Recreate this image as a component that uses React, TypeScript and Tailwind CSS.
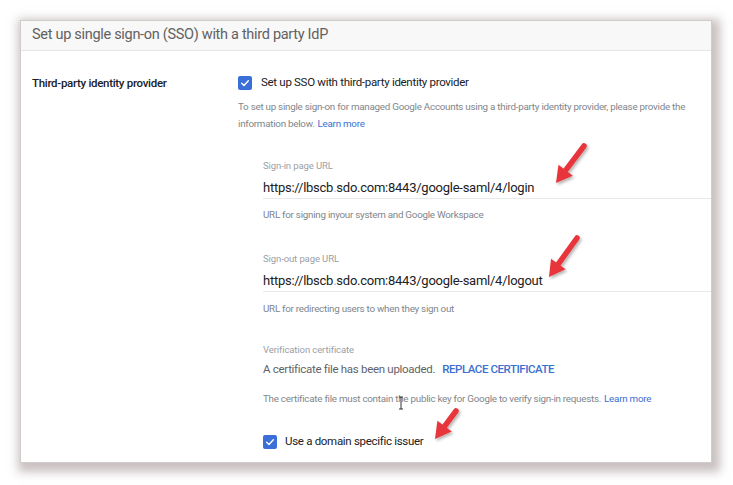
import React from 'react'

type Pt = [number, number]

// red call-out arrow: round-capped shaft plus a triangular head at the tip
function Arrow({ tail, tip }: { tail: Pt; tip: Pt }) {
  const dx = tip[0] - tail[0]
  const dy = tip[1] - tail[1]
  const len = Math.hypot(dx, dy)
  const ux = dx / len
  const uy = dy / len
  const bx = tip[0] - ux * 16
  const by = tip[1] - uy * 16
  const nx = -uy * 9
  const ny = ux * 9
  return (
    <g filter="url(#arrowShadow)">
      <line x1={tail[0]} y1={tail[1]} x2={bx + ux * 2} y2={by + uy * 2} stroke="#e8363a" strokeWidth={5.5} strokeLinecap="round" />
      <polygon points={`${tip[0]},${tip[1]} ${bx + nx},${by + ny} ${bx - nx},${by - ny}`} fill="#e8363a" />
    </g>
  )
}

function Checkbox() {
  return (
    <span className="flex h-[14px] w-[14px] shrink-0 items-center justify-center rounded-[2px] bg-[#3a6fd8]">
      <svg width="10" height="10" viewBox="0 0 12 12">
        <path d="M2 6.4 L4.8 9 L10 3.4" fill="none" stroke="#fff" strokeWidth="1.7" strokeLinecap="round" strokeLinejoin="round" />
      </svg>
    </span>
  )
}

export default function App() {
  return (
    <div className="relative h-[485px] w-[733px] overflow-hidden bg-white pl-[20px] pt-[20px]" style={{ fontFamily: 'Roboto, "Liberation Sans", sans-serif' }}>
      <div className="h-[443px] w-[692px] border border-[#cfcccc] bg-white shadow-[3px_4px_9px_5px_rgba(150,132,132,0.5)]">
        {/* header */}
        <div className="h-[30px] border-b border-[#e6e6e6] bg-[#f8f8f8] pl-[11px] text-[14.5px] leading-[28px] tracking-[-0.3px] text-[#616161]">
          Set up single sign-on (SSO) with a third party IdP
        </div>

        <div className="flex pt-[22px]">
          <div className="w-[217px] shrink-0 pl-[11px] text-[11.5px] font-medium leading-[20px] tracking-[-0.3px] text-[#202124]">
            Third-party identity provider
          </div>

          <div className="flex-1">
            <div className="flex h-[20px] items-center gap-[9px]">
              <Checkbox />
              <span className="text-[11.5px] tracking-[-0.3px] text-[#202124]">Set up SSO with third-party identity provider</span>
            </div>
            <div className="mt-[5px] max-w-[456px] text-[9.8px] leading-[17px] tracking-[-0.25px] text-[#80868b]">
              <div>To set up single sign-on for managed Google Accounts using a third-party identity provider, please provide the</div>
              <div className="flex gap-[3px]">
                <span>information below.</span>
                <span className="text-[#3b6fd0]">Learn more</span>
              </div>
            </div>

            <div className="pl-[25px]">
              {/* sign-in url */}
              <div className="mt-[27px] text-[9.5px] leading-[14px] tracking-[-0.1px] text-[#9aa0a6]">Sign-in page URL</div>
              <div className="mt-[5px] border-b border-[#e8e8e8] text-[13px] leading-[20px] tracking-[-0.25px] text-[#202124]">
                https://lbscb<span className="text-[#8fb0e0]">.</span>sdo.com:8443/google-saml/4/login
              </div>
              <div className="mt-[9px] text-[9.8px] leading-[14px] tracking-[-0.25px] text-[#80868b]">URL for signing inyour system and Google Workspace</div>

              {/* sign-out url */}
              <div className="mt-[30px] text-[9.5px] leading-[14px] tracking-[-0.1px] text-[#9aa0a6]">Sign-out page URL</div>
              <div className="mt-[5px] border-b border-[#e8e8e8] text-[13px] leading-[20px] tracking-[-0.25px] text-[#202124]">
                https://lbscb<span className="text-[#8fb0e0]">.</span>sdo.com:8443/google-saml/4/logout
              </div>
              <div className="mt-[10px] text-[9.8px] leading-[14px] tracking-[-0.25px] text-[#80868b]">URL for redirecting users to when they sign out</div>

              {/* certificate */}
              <div className="mt-[27px] text-[9.5px] leading-[14px] tracking-[-0.1px] text-[#9aa0a6]">Verification certificate</div>
              <div className="mt-[3px] flex items-center text-[11.5px] leading-[18px]">
                <span className="tracking-[-0.3px] text-[#5f6368]">A certificate file has been uploaded.</span>
                <span className="ml-[7px] font-medium tracking-[-0.45px] text-[#3b6fd0]">REPLACE CERTIFICATE</span>
              </div>
              <div className="mt-[13px] flex gap-[3px] text-[9.8px] leading-[16px] tracking-[-0.25px] text-[#80868b]">
                <span>The certificate file must contain the public key for Google to verify sign-in requests.</span>
                <span className="text-[#3b6fd0]">Learn more</span>
              </div>

              <div className="mt-[25px] flex h-[20px] items-center gap-[8px]">
                <Checkbox />
                <span className="text-[11.5px] tracking-[-0.3px] text-[#202124]">Use a domain specific issuer</span>
              </div>
            </div>
          </div>
        </div>
      </div>

      <svg className="pointer-events-none absolute left-0 top-0" width="733" height="485">
        <defs>
          <filter id="arrowShadow" x="-50%" y="-50%" width="200%" height="200%">
            <feDropShadow dx="1.5" dy="2" stdDeviation="1.5" floodColor="#000" floodOpacity="0.3" />
          </filter>
        </defs>
        <Arrow tail={[584, 146]} tip={[556, 183]} />
        <Arrow tail={[577, 238]} tip={[549, 277]} />
        <Arrow tail={[456, 411]} tip={[435, 439]} />
        {/* text cursor */}
        <path d="M399 397 H403 M401 397 V409 M399 409 H403" stroke="#333" strokeWidth="1" fill="none" />
      </svg>
    </div>
  )
}
